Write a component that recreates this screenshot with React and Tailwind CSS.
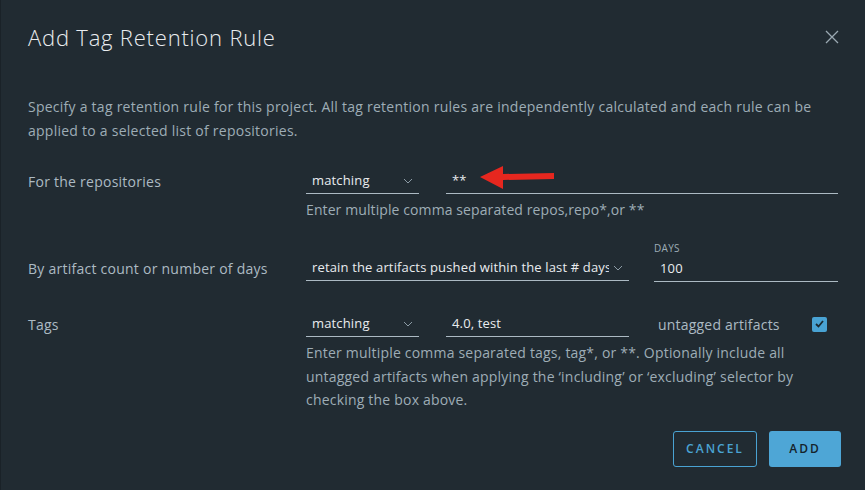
import React from "react";

function Chevron() {
  return (
    <svg width="10" height="6" viewBox="0 0 10 6" className="text-[#8c9ba5]">
      <path d="M1 1 L5 5 L9 1" fill="none" stroke="currentColor" strokeWidth="1" />
    </svg>
  );
}

function Select({ value, width }) {
  return (
    <div
      className={
        "flex h-[26px] items-center justify-between border-b border-[#acbac3] pl-[6px] pr-[6px] text-[13px] tracking-[0.15px] text-[#e9ecef] " +
        width
      }
    >
      <span className="overflow-hidden whitespace-nowrap">{value}</span>
      <span className="ml-1 shrink-0">
        <Chevron />
      </span>
    </div>
  );
}

function TextInput({ value, width, children }) {
  return (
    <div
      className={
        "relative flex h-[26px] items-center border-b border-[#acbac3] pl-[6px] text-[13px] tracking-[0.15px] text-[#e9ecef] " +
        width
      }
    >
      {value}
      {children}
    </div>
  );
}

function RedArrow() {
  return (
    <svg
      width="76"
      height="26"
      viewBox="0 0 76 26"
      className="absolute left-[34px] top-[-2px]"
    >
      <polygon points="0,11 23,0 23,8 74,7 74,13 23,14 23,23" fill="#e6271f" />
    </svg>
  );
}

export default function App() {
  return (
    <div
      className="h-[490px] w-[865px] overflow-hidden border-l border-[#1a2228] bg-[#212b32] pl-[27px] pr-[24px] text-[#acbac3]"
      style={{ fontFamily: "'Open Sans', sans-serif" }}
    >
      <div className="flex h-[28px] items-center justify-between mt-[23px]">
        <h1 className="text-[22px] font-light tracking-[0.8px] text-[#eaedf0]">
          Add Tag Retention Rule
        </h1>
        <svg width="16" height="16" viewBox="0 0 16 16" className="mr-[1px]">
          <path d="M2 2 L14 14 M14 2 L2 14" stroke="#9aa9b2" strokeWidth="1.3" fill="none" />
        </svg>
      </div>

      <p className="mt-[44px] text-[14px] leading-[24px] tracking-[0.25px] text-[#9eadb6]">
        Specify a tag retention rule for this project. All tag retention rules are independently
        calculated and each rule can be applied to a selected list of repositories.
      </p>

      {/* repositories */}
      <div className="mt-[25px] flex">
        <div className="flex h-[26px] w-[278px] items-center text-[14px] tracking-[0.25px]">
          For the repositories
        </div>
        <div className="flex-1">
          <div className="flex gap-[27px] pr-[3px]">
            <Select value="matching" width="w-[113px]" />
            <TextInput value="**" width="flex-1">
              <RedArrow />
            </TextInput>
          </div>
          <div className="mt-[6px] text-[14px] leading-[20px] tracking-[0.1px] text-[#9eadb6]">
            Enter multiple comma separated repos,repo*,or **
          </div>
        </div>
      </div>

      {/* count / days */}
      <div className="mt-[22px] flex items-end">
        <div className="flex h-[28px] w-[278px] items-center text-[14px] tracking-[0.25px]">
          By artifact count or number of days
        </div>
        <div className="flex flex-1 items-end gap-[25px] pr-[3px]">
          <div className="mb-[1px]">
            <Select value="retain the artifacts pushed within the last # days" width="w-[323px]" />
          </div>
          <div className="flex-1">
            <div className="mb-[2px] text-[10px] leading-[12px] tracking-[0.3px] text-[#9eadb6]">DAYS</div>
            <TextInput value="100" width="w-full" />
          </div>
        </div>
      </div>

      {/* tags */}
      <div className="mt-[29px] flex">
        <div className="flex h-[26px] w-[278px] items-center text-[14px] tracking-[0.25px]">Tags</div>
        <div className="flex-1">
          <div className="flex items-center pr-[3px]">
            <Select value="matching" width="w-[113px]" />
            <div className="ml-[27px]">
              <TextInput value="4.0, test" width="w-[183px]" />
            </div>
            <span className="ml-[29px] text-[14px] tracking-[0.2px] text-[#acbac3]">untagged artifacts</span>
            <span className="ml-auto mr-[11px] flex h-[15px] w-[15px] items-center justify-center rounded-[2px] bg-[#49a3d4]">
              <svg width="9" height="8" viewBox="0 0 9 8">
                <path d="M1 4 L3.5 6.5 L8 1" stroke="#1b2a32" strokeWidth="1.8" fill="none" />
              </svg>
            </span>
          </div>
          <div className="mt-[4px] w-[510px] text-[14px] leading-[23.5px] tracking-[0.2px] text-[#9eadb6]">
            Enter multiple comma separated tags, tag*, or **. Optionally include all untagged
            artifacts when applying the ‘including’ or ‘excluding’ selector by checking the box
            above.
          </div>
        </div>
      </div>

      <div className="mt-[19px] flex justify-end gap-[12px]">
        <button className="h-[36px] w-[84px] rounded-[3px] border border-[#4aa3d3] text-[12px] font-semibold tracking-[2px] text-[#4aa3d3]">
          CANCEL
        </button>
        <button className="h-[36px] w-[72px] rounded-[3px] bg-[#4ea6d6] text-[12px] font-semibold tracking-[2px] text-[#15232b]">
          ADD
        </button>
      </div>
    </div>
  );
}
